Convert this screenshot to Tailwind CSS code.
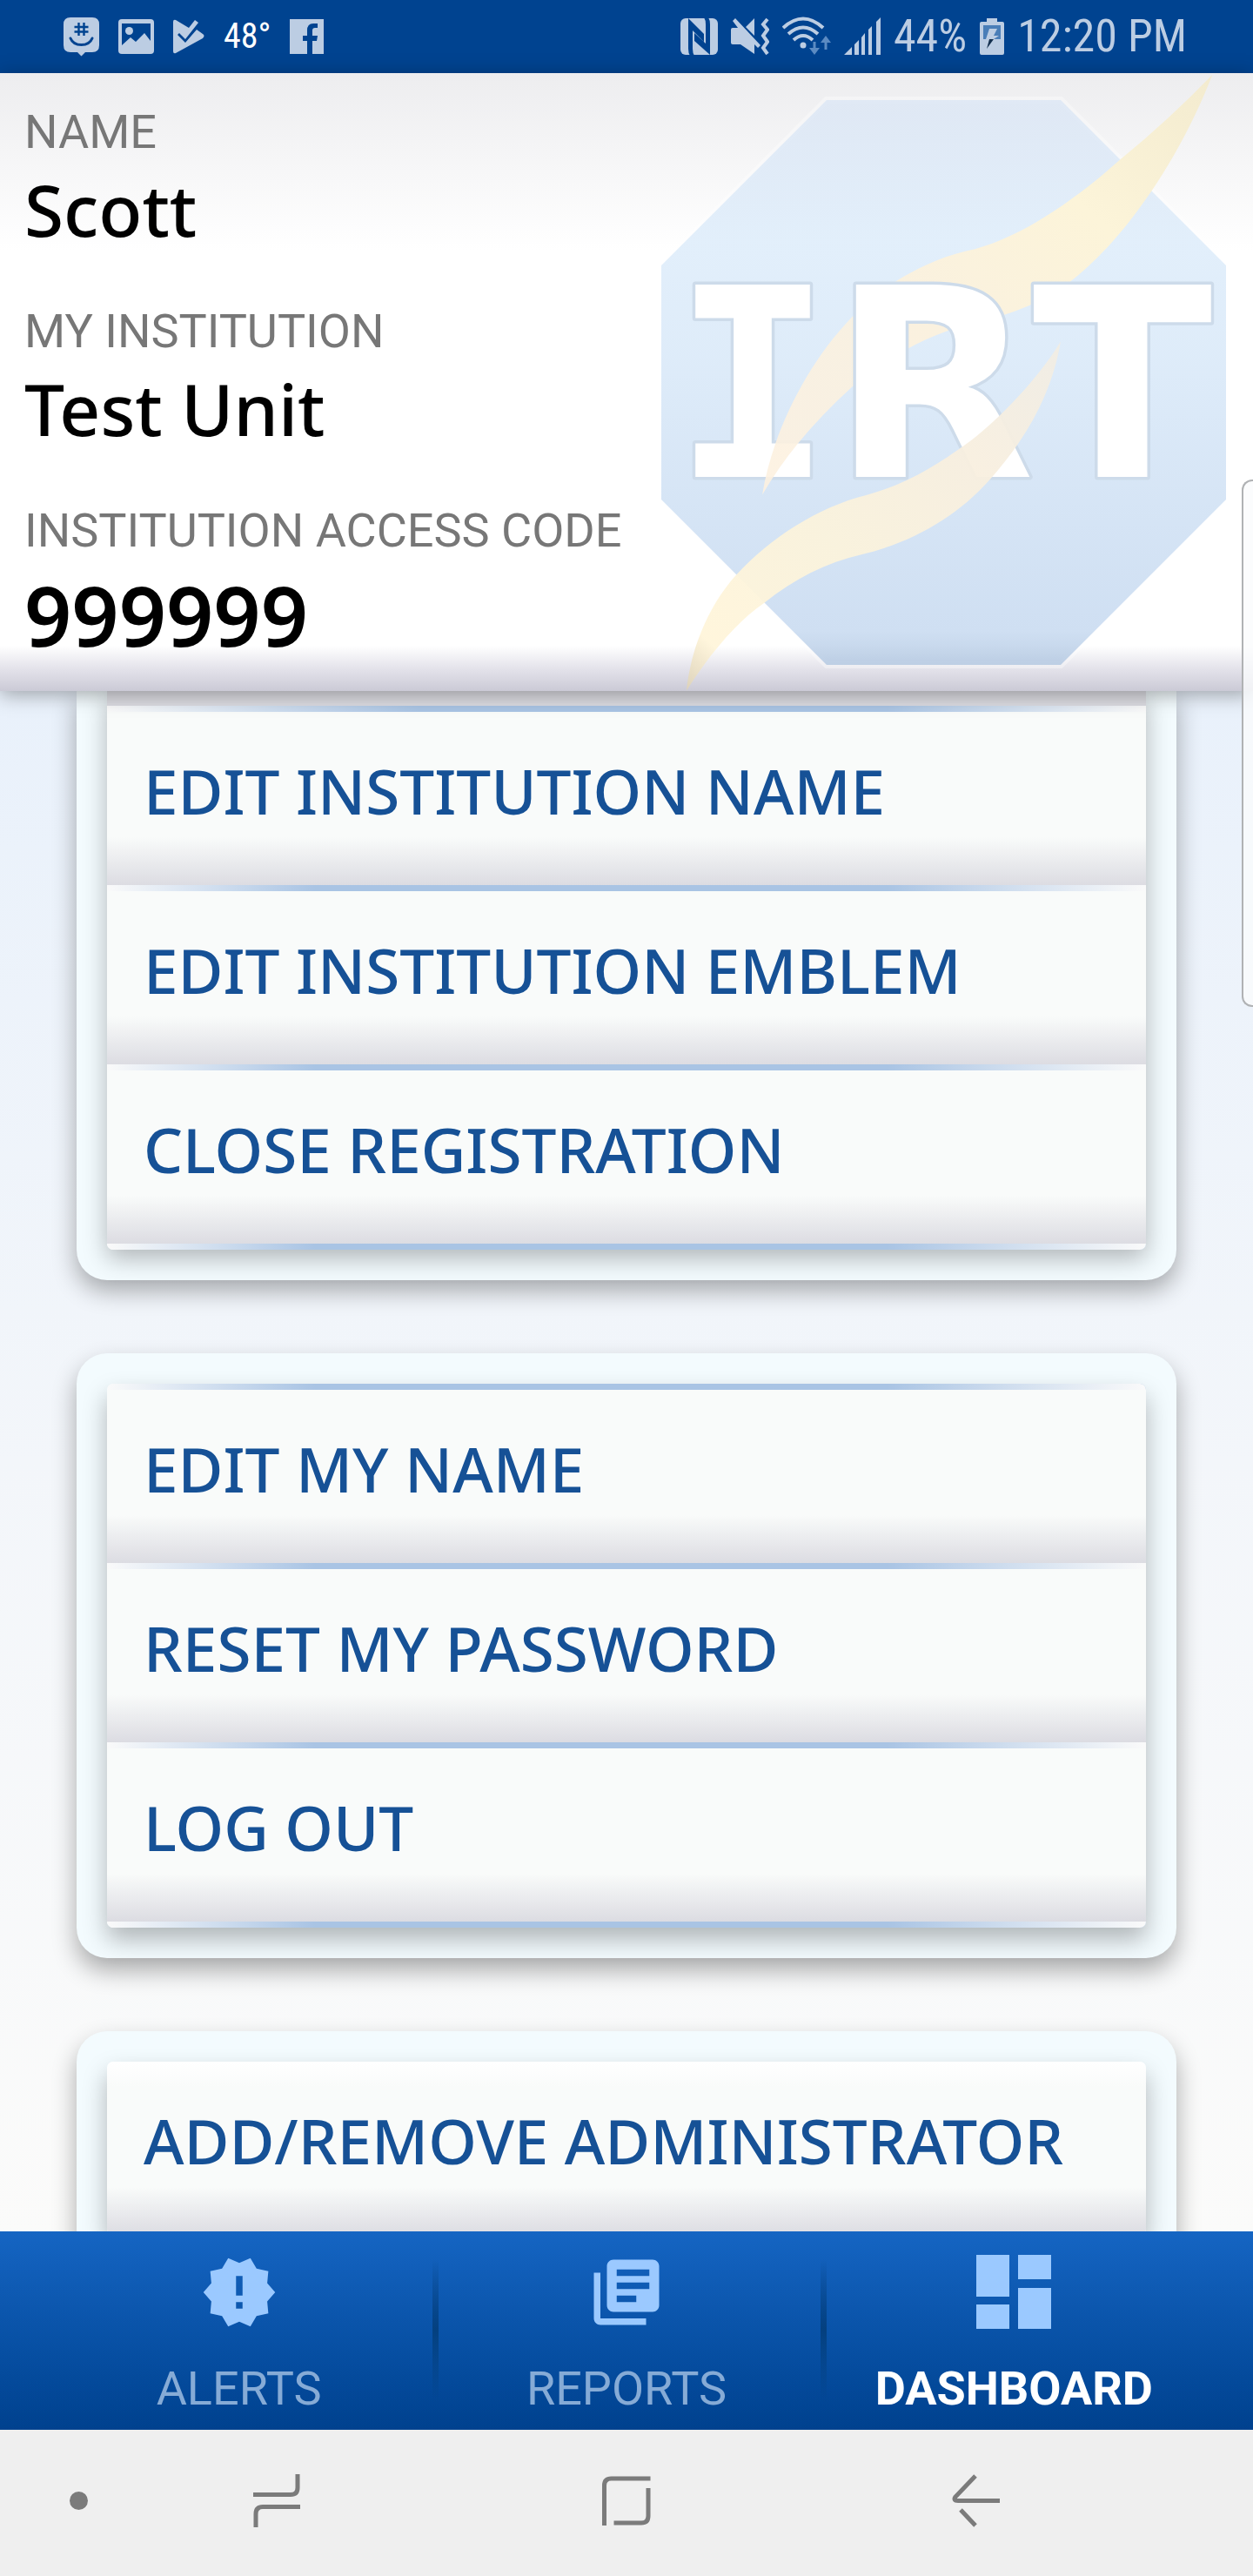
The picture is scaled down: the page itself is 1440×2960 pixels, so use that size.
<!DOCTYPE html>
<html lang="en">
<head>
<meta charset="utf-8">
<meta name="viewport" content="width=device-width, initial-scale=1">
<title>Dashboard</title>
<script src="https://cdn.jsdelivr.net/npm/@tailwindcss/browser@4"></script>
</head>
<body class="bg-[#f5f8fb]">
<div class="relative flex h-screen flex-col overflow-hidden font-[Roboto,sans-serif]">

  <!-- Status bar -->
  <div class="flex h-[84px] shrink-0 items-center justify-between bg-[#004390] pr-[76px] pl-[73px] text-[#bccde3]">
    <div class="flex items-center gap-[22px]">
      <svg class="h-[46px] w-[41px]" viewBox="0 0 41 46" fill="currentColor"><path d="M8 1h25q8 0 8 8v24q0 8-8 8h-8l-4.500 4.500L16 41H8q-8 0-8-8V9q0-8 8-8z"/><g stroke="#004390" fill="none"><path d="M17.500 7v15M23.500 7v15M12.500 12h16M12.500 17.500h16" stroke-width="2.400"/><path d="M8 25c4 10 21 10 25 0" stroke-width="3" stroke-linecap="round"/></g></svg>
      <svg class="h-[40px] w-[41px]" viewBox="0 0 41 40"><rect width="41" height="40" rx="4" fill="currentColor"/><path d="M4 5h33v20l-7-9-10 10-6-5-10 9z" fill="#004390"/><circle cx="12.500" cy="13.500" r="4.500" fill="currentColor"/></svg>
      <svg class="h-[40px] w-[36px]" viewBox="0 0 36 40" fill="currentColor"><path d="M0 3q0-3 3-2l15 9 7-9 4 3-15 19-7-7-2 2 9 9 13-15 7 5q3 2 0 5L3 39q-3 1-3-2z"/></svg>
      <span class="font-['Roboto_Condensed',Roboto,sans-serif] text-[40px] leading-[48px] text-white">48°</span>
      <svg class="h-[40px] w-[39px]" viewBox="0 0 39 40"><path d="M0 0h39v40H26V25h5l1-6h-6v-6q0-3 3-3h3V5h-5q-7 0-7 8v6h-5v6h5v15H0z" fill="currentColor"/></svg>
    </div>
    <div class="flex items-center gap-[15px]">
      <svg class="h-[44px] w-[43px]" viewBox="0 0 43 44"><rect x="0" y="1" width="43" height="42" rx="6" fill="currentColor"/><path d="M9 1l18 18v9L14 15v21q0 5 2 8h-5q-2-3-2-8zM34 43L16 27v-9l13 12V8q0-5-2-8h5q2 3 2 8z" fill="#004390"/></svg>
      <svg class="h-[44px] w-[44px]" viewBox="0 0 44 44" fill="currentColor"><path d="M0 14q0-2 2-2h6L2 4l3-3 29 31-3 3-4-4v11L11 31H2q-2 0-2-2zM17 11l10-10v20z"/><path d="M42 2l-5 6 5 6-5 7 5 7-5 7 5 7" fill="none" stroke="currentColor" stroke-width="4"/></svg>
      <svg class="h-[46px] w-[56px]" viewBox="0 0 56 46" fill="none" stroke="currentColor" stroke-width="4"><path d="M1 13Q24-8 47 13M7 20q17-15 34 0M13 27q11-10 22 0"/><circle cx="24" cy="33" r="3.500" fill="currentColor" stroke="none"/><path d="M37 29v9M50 38v-9" stroke="#5c8bc2" stroke-width="3"/><path d="M31 36h12l-6 8zM44 30h12l-6-8z" fill="#5c8bc2" stroke="none"/></svg>
      <svg class="h-[44px] w-[42px]" viewBox="0 0 42 44" fill="currentColor"><path d="M0 43l9-9v9zM12 43V31l5-5v17zM20 43V23l4-5v25zM28 43V14l4-4v33zM37 43V5l5-5v43z"/></svg>
      <span class="font-['Roboto_Condensed',Roboto,sans-serif] text-[52px] leading-[56px]">44%</span>
      <svg class="h-[44px] w-[28px]" viewBox="0 0 28 44"><path d="M8 5V1h12v4h6q2 0 2 2v34q0 2-2 2H2q-2 0-2-2V7q0-2 2-2z" fill="currentColor"/><path d="M4 9h20v16H4z" fill="#4a7eb8"/><path d="M11 13h9l-4 8h6l-6 4H7z" fill="currentColor"/><path d="M11 25h5L8 36z" fill="#14304f"/></svg>
      <span class="font-['Roboto_Condensed',Roboto,sans-serif] text-[52px] leading-[56px]">12:20 PM</span>
    </div>
  </div>

  <!-- Account summary -->
  <header class="relative z-10 shrink-0 bg-[linear-gradient(to_top,#cbcad6_0,#e3e2ea_25px,#ffffff_52px,#ffffff_506px,#ededef_100%)] shadow-[0_4px_22px_rgba(0,0,0,0.34)]">
    <svg class="absolute inset-y-0 right-0 h-full w-1/2" viewBox="0 4 720 710" preserveAspectRatio="xMaxYMid meet" role="img" aria-label="IRT emblem">
      <defs>
        <linearGradient id="oct" x1="0" y1="0" x2="0" y2="1">
          <stop offset="0" stop-color="#dbe6f5"/><stop offset=".25" stop-color="#dbebfa"/><stop offset=".45" stop-color="#d6e7f8"/><stop offset=".94" stop-color="#c3d7ef"/><stop offset="1" stop-color="#b0c6e0"/>
        </linearGradient>
        <linearGradient id="gold" x1="1" y1="0" x2="0" y2="1">
          <stop offset="0" stop-color="#f3ebcf"/><stop offset=".3" stop-color="#fcf4d9"/><stop offset=".6" stop-color="#faf1df"/><stop offset="1" stop-color="#fdf1e0"/>
        </linearGradient>
        <linearGradient id="gold2" x1="1" y1="0" x2="0" y2="1">
          <stop offset="0" stop-color="#f1ede4"/><stop offset=".3" stop-color="#f8efdf"/><stop offset=".6" stop-color="#fbf3dc"/><stop offset=".9" stop-color="#fff5da"/><stop offset="1" stop-color="#ddd2b8"/>
        </linearGradient>
        <clipPath id="front"><path d="M300 560h263v500H300z"/></clipPath>
        <clipPath id="back"><path d="M563 0h940v800H563z"/></clipPath>
        <path id="swoosh" d="M1467 12Q1360 120 1235 220C1120 320 980 415 850 442C780 458 720 488 672 517C500 620 370 850 340 1035Q420 900 565 772C660 695 760 645 850 622C950 600 1040 570 1110 517C1240 420 1380 230 1467 12Z"/>
      </defs>
      <path d="M230 35H499L689 225V494L499 684H230L40 494V225Z" fill="url(#oct)" fill-opacity=".8" stroke="#fff" stroke-opacity=".35" stroke-width="8" paint-order="stroke"/>
      <g transform="scale(.459 .472)"><g clip-path="url(#back)"><use href="#swoosh" fill="url(#gold)"/></g></g>
      <g font-family="'DejaVu Sans', sans-serif" font-weight="700" font-size="303" fill="#fff" stroke="#cddbea" stroke-width="7" stroke-linejoin="round" paint-order="stroke">
        <text x="145" y="468" text-anchor="middle" font-family="'DejaVu Sans Mono', monospace">I</text>
        <text x="236" y="468">R</text>
        <text x="570" y="468" text-anchor="middle">T</text>
      </g>
      <g transform="scale(.459 .472)">
        <g clip-path="url(#front)"><use href="#swoosh" fill="url(#gold)" fill-opacity=".9"/></g>
        <path fill="url(#gold2)" fill-opacity=".95" d="M1087 662C1020 770 900 880 845 915C780 960 700 1010 600 1036C480 1065 360 1140 275 1230C200 1310 160 1420 150 1512C210 1420 280 1340 345 1298C420 1240 500 1200 590 1180C720 1150 830 1085 908 1000C1000 900 1065 790 1087 662Z"/>
      </g>
    </svg>
    <dl class="relative flex flex-col gap-[53px] pt-9 pb-6 pl-7">
      <div>
        <dt class="text-[54px] leading-[64px] text-[#777777]">NAME</dt>
        <dd class="font-['Noto_Sans',sans-serif] text-[82px] leading-[112px] font-medium text-black">Scott</dd>
      </div>
      <div>
        <dt class="text-[54px] leading-[64px] text-[#777777]">MY INSTITUTION</dt>
        <dd class="font-['Noto_Sans',sans-serif] text-[82px] leading-[112px] font-medium text-black">Test Unit</dd>
      </div>
      <div>
        <dt class="text-[54px] leading-[64px] text-[#777777]">INSTITUTION ACCESS CODE</dt>
        <dd class="font-['Noto_Sans',sans-serif] text-[95px] leading-[128px] font-semibold text-black">999999</dd>
      </div>
    </dl>
  </header>

  <!-- Settings lists -->
  <main class="flex min-h-0 flex-1 flex-col gap-[84px] overflow-hidden bg-linear-to-b from-[#e9f1fb] via-[#f3f6fa] to-[#fbfbfa] px-[88px] font-['Noto_Sans',sans-serif] text-[71px] font-medium text-[#165196]">
    <section class="shrink-0 rounded-b-[35px] bg-[#f3fbfe] px-[35px] pb-[35px] shadow-[0_12px_28px_rgba(0,0,0,0.32)]">
      <div class="overflow-hidden rounded-b-[7px] shadow-[0_10px_28px_rgba(0,0,0,0.28)]">
        <div class="h-[17px] bg-[#dcdce2]"></div>
        <div class="h-[7px] bg-linear-to-r from-[#fafafa] via-[#a9c4e4] via-30% to-[#a9c4e4]"><div class="ml-auto h-full w-1/4 bg-linear-to-r from-[#fafafa]/0 to-[#fafafa]"></div></div>
        <button class="flex h-[199px] w-full items-center bg-[linear-gradient(to_top,#dcdce2_0,#f9fbfa_55px)] pb-4 pl-[42px] text-left">EDIT INSTITUTION NAME</button>
        <div class="h-[7px] bg-linear-to-r from-[#fafafa] via-[#a9c4e4] via-20% to-[#a9c4e4]"><div class="ml-auto h-full w-1/4 bg-linear-to-r from-[#fafafa]/0 to-[#fafafa]"></div></div>
        <button class="flex h-[199px] w-full items-center bg-[linear-gradient(to_top,#dcdce2_0,#f9fbfa_55px)] pb-4 pl-[42px] text-left">EDIT INSTITUTION EMBLEM</button>
        <div class="h-[7px] bg-linear-to-r from-[#fafafa] via-[#a9c4e4] via-20% to-[#a9c4e4]"><div class="ml-auto h-full w-1/4 bg-linear-to-r from-[#fafafa]/0 to-[#fafafa]"></div></div>
        <button class="flex h-[199px] w-full items-center bg-[linear-gradient(to_top,#dcdce2_0,#f9fbfa_55px)] pb-4 pl-[42px] text-left">CLOSE REGISTRATION</button>
        <div class="h-[7px] bg-linear-to-r from-[#fafafa] via-[#a9c4e4] via-20% to-[#a9c4e4]"><div class="ml-auto h-full w-1/4 bg-linear-to-r from-[#fafafa]/0 to-[#fafafa]"></div></div>
      </div>
    </section>

    <section class="shrink-0 rounded-[35px] bg-[#f3fbfe] p-[35px] shadow-[0_14px_28px_rgba(0,0,0,0.32)]">
      <div class="overflow-hidden rounded-[7px] shadow-[0_14px_28px_rgba(0,0,0,0.28)]">
        <div class="h-[7px] bg-linear-to-r from-[#fafafa] via-[#a9c4e4] via-20% to-[#a9c4e4]"><div class="ml-auto h-full w-1/4 bg-linear-to-r from-[#fafafa]/0 to-[#fafafa]"></div></div>
        <button class="flex h-[199px] w-full items-center bg-[linear-gradient(to_top,#dcdce2_0,#f9fbfa_55px)] pb-4 pl-[42px] text-left">EDIT MY NAME</button>
        <div class="h-[7px] bg-linear-to-r from-[#fafafa] via-[#a9c4e4] via-20% to-[#a9c4e4]"><div class="ml-auto h-full w-1/4 bg-linear-to-r from-[#fafafa]/0 to-[#fafafa]"></div></div>
        <button class="flex h-[199px] w-full items-center bg-[linear-gradient(to_top,#dcdce2_0,#f9fbfa_55px)] pb-4 pl-[42px] text-left">RESET MY PASSWORD</button>
        <div class="h-[7px] bg-linear-to-r from-[#fafafa] via-[#a9c4e4] via-20% to-[#a9c4e4]"><div class="ml-auto h-full w-1/4 bg-linear-to-r from-[#fafafa]/0 to-[#fafafa]"></div></div>
        <button class="flex h-[199px] w-full items-center bg-[linear-gradient(to_top,#dcdce2_0,#f9fbfa_55px)] pb-4 pl-[42px] text-left">LOG OUT</button>
        <div class="h-[7px] bg-linear-to-r from-[#fafafa] via-[#a9c4e4] via-20% to-[#a9c4e4]"><div class="ml-auto h-full w-1/4 bg-linear-to-r from-[#fafafa]/0 to-[#fafafa]"></div></div>
      </div>
    </section>

    <section class="shrink-0 rounded-[35px] bg-[#f3fbfe] p-[35px] shadow-[0_14px_28px_rgba(0,0,0,0.32)]">
      <div class="overflow-hidden rounded-[7px] shadow-[0_14px_28px_rgba(0,0,0,0.28)]">
        <button class="flex h-[199px] w-full items-center bg-[linear-gradient(to_top,#dcdce2_0,#f9fbfa_55px,#f9fbfa_170px,#ffffff_100%)] pb-4 pl-[42px] text-left">ADD/REMOVE ADMINISTRATOR</button>
      </div>
    </section>
  </main>

  <!-- Tab bar -->
  <nav class="relative flex shrink-0 bg-linear-to-b from-[#1565c3] to-[#00418e] px-[52px] text-[54px] leading-[64px] text-[#86abd6]">
    <a href="#" class="flex flex-1 flex-col items-center gap-[34px] pt-[25px] pb-[15px]">
      <svg class="size-[90px]" viewBox="0 0 24 24" fill="#9bc9ff"><path d="M23 12l-2.440-2.780.340-3.680-3.610-.820-1.890-3.180L12 3 8.600 1.540 6.710 4.720l-3.610.810.340 3.680L1 12l2.440 2.780-.340 3.690 3.610.820 1.890 3.180L12 21l3.400 1.460 1.890-3.180 3.610-.820-.340-3.680L23 12zm-10 5h-2v-2h2v2zm0-4h-2V7h2v6z"/></svg>
      <span>ALERTS</span>
    </a>
    <div class="my-8 -mr-[7px] w-[7px] bg-linear-to-b from-[#04407f]/0 via-[#04407f] to-[#04407f]/0"></div>
    <a href="#" class="flex flex-1 flex-col items-center gap-[34px] pt-[25px] pb-[15px]">
      <svg class="size-[90px]" viewBox="0 0 24 24" fill="#9bc9ff"><path d="M4 6H2v14c0 1.100.900 2 2 2h14v-2H4V6zm16-4H8c-1.100 0-2 .900-2 2v12c0 1.100.900 2 2 2h12c1.100 0 2-.900 2-2V4c0-1.100-.900-2-2-2zm-1 9H9V9h10v2zm-4 4H9v-2h6v2zm4-8H9V5h10v2z"/></svg>
      <span>REPORTS</span>
    </a>
    <div class="my-8 -mr-[7px] w-[7px] bg-linear-to-b from-[#04407f]/0 via-[#04407f] to-[#04407f]/0"></div>
    <a href="#" aria-current="page" class="flex flex-1 flex-col items-center gap-[34px] pt-[25px] pb-[15px]">
      <svg class="size-[90px]" viewBox="0 0 90 90" fill="#9bc9ff"><path d="M2 2h38v48H2zM2 59h38v28H2zM50 2h38v28H50zM50 40h38v47H50z"/></svg>
      <span class="font-bold text-white">DASHBOARD</span>
    </a>
  </nav>

  <!-- System navigation -->
  <div class="flex h-[168px] shrink-0 items-center bg-[#efefef] pb-[6px] text-[#7b7b7b]">
    <div class="flex w-[117px] justify-end pr-4"><span class="size-[21px] rounded-full bg-[#7b7b7b]"></span></div>
    <button class="flex flex-1 justify-center" aria-label="Recent apps"><svg class="h-[64px] w-[56px]" viewBox="0 0 56 64" fill="none" stroke="currentColor" stroke-width="5"><path d="M1 25.500h43q8 0 8-8V2M55 39.500H12q-8 0-8 8V63"/></svg></button>
    <button class="flex flex-1 justify-center" aria-label="Home"><svg class="h-[64px] w-[60px]" viewBox="0 0 60 64" fill="none" stroke="currentColor" stroke-width="5"><path d="M4.500 61V15q0-8 8-8H57.500M55 18v32q0 8-8 8H15.500"/></svg></button>
    <button class="flex flex-1 justify-center" aria-label="Back"><svg class="h-[64px] w-[60px]" viewBox="0 0 60 64" fill="none" stroke="currentColor" stroke-width="5"><path d="M29 4L6 28q-3 4.500 3 4.500H57M12 43l17 18"/></svg></button>
    <div class="w-[117px]"></div>
  </div>

  <!-- Edge panel handle lying over the content -->
  <div class="absolute top-[551px] right-0 z-20 h-[606px] w-[13px] rounded-l-[12px] border-2 border-r-0 border-[#b0b2b4] bg-[#fafbfc]/80"></div>
</div>
</body>
</html>
